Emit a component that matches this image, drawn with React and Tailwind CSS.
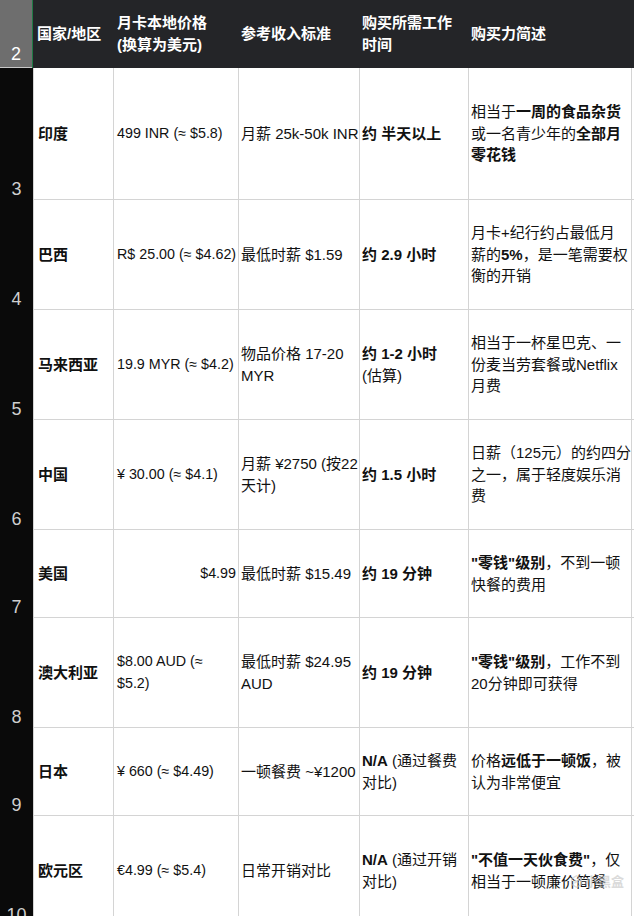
import React from "react";

const FONT = { fontFamily: "'Liberation Sans', 'Noto Sans CJK SC', sans-serif" };

const rows = [
  {
    n: 3, h: "h-[132px]",
    a: "印度",
    b: ["499 INR (≈ $5.8)"],
    c: ["月薪 25k-50k INR"],
    d: [<b key="1">约 半天以上</b>],
    e: [
      <>相当于<b>一周的食品杂货</b></>,
      <>或一名青少年的<b>全部月</b></>,
      <b>零花钱</b>,
    ],
  },
  {
    n: 4, h: "h-[110px]",
    a: "巴西",
    b: ["R$ 25.00 (≈ $4.62)"],
    c: ["最低时薪 $1.59"],
    d: [<b key="1">约 2.9 小时</b>],
    e: [
      "月卡+纪行约占最低月",
      <>薪的<b>5%</b>，是一笔需要权</>,
      "衡的开销",
    ],
  },
  {
    n: 5, h: "h-[110px]",
    a: "马来西亚",
    b: ["19.9 MYR (≈ $4.2)"],
    c: ["物品价格 17-20", "MYR"],
    d: [<b key="1">约 1-2 小时</b>, "(估算)"],
    e: ["相当于一杯星巴克、一", "份麦当劳套餐或Netflix", "月费"],
  },
  {
    n: 6, h: "h-[110px]",
    a: "中国",
    b: ["¥ 30.00 (≈ $4.1)"],
    c: ["月薪 ¥2750 (按22", "天计)"],
    d: [<b key="1">约 1.5 小时</b>],
    e: ["日薪（125元）的约四分", "之一，属于轻度娱乐消", "费"],
  },
  {
    n: 7, h: "h-[88px]",
    a: "美国",
    b: ["$4.99"],
    bRight: true,
    c: ["最低时薪 $15.49"],
    d: [<b key="1">约 19 分钟</b>],
    e: [<><b>"零钱"级别</b>，不到一顿</>, "快餐的费用"],
  },
  {
    n: 8, h: "h-[110px]",
    a: "澳大利亚",
    b: ["$8.00 AUD (≈", "$5.2)"],
    c: ["最低时薪 $24.95", "AUD"],
    d: [<b key="1">约 19 分钟</b>],
    e: [<><b>"零钱"级别</b>，工作不到</>, "20分钟即可获得"],
  },
  {
    n: 9, h: "h-[88px]",
    a: "日本",
    b: ["¥ 660 (≈ $4.49)"],
    c: ["一顿餐费 ~¥1200"],
    d: [<><b>N/A</b> (通过餐费</>, "对比)"],
    e: [<>价格<b>远低于一顿饭</b>，被</>, "认为非常便宜"],
  },
  {
    n: 10, h: "h-[110px]",
    a: "欧元区",
    b: ["€4.99 (≈ $5.4)"],
    c: ["日常开销对比"],
    d: [<><b>N/A</b> (通过开销</>, "对比)"],
    e: [<><b>"不值一天伙食费"</b>，仅</>, "相当于一顿廉价简餐"],
  },
];

function Lines({ lines }) {
  return (
    <div className="flex flex-col">
      {lines.map((l, i) => (
        <div key={i} className="whitespace-nowrap">
          {l}
        </div>
      ))}
    </div>
  );
}

function Row({ r }) {
  return (
    <div className={`flex ${r.h} shrink-0`}>
      <div className="w-[33px] shrink-0 bg-[#0a0a0a] flex items-end justify-center pb-[1px] text-[18px] leading-[20px] text-[#cfcfcf] font-light">
        {r.n}
      </div>
      <div className="flex flex-1 border-b border-[#d4d4d4] bg-white text-[15px] leading-[21.5px] text-[#111]">
        <div className="w-[81px] shrink-0 border-x border-[#d4d4d4] flex items-center pl-[4px] font-bold">
          {r.a}
        </div>
        <div
          className={`w-[125px] shrink-0 border-r border-[#d4d4d4] flex items-center px-[3px] text-[14.3px] ${
            r.bRight ? "justify-end pr-[2px]" : ""
          }`}
        >
          <Lines lines={r.b} />
        </div>
        <div className="w-[121px] shrink-0 border-r border-[#d4d4d4] flex items-center px-[2px]">
          <Lines lines={r.c} />
        </div>
        <div className="w-[109px] shrink-0 border-r border-[#d4d4d4] flex items-center px-[2px]">
          <Lines lines={r.d} />
        </div>
        <div className="w-[163px] shrink-0 border-r border-[#d4d4d4] flex items-center px-[2px]">
          <Lines lines={r.e} />
        </div>
        <div className="flex-1" />
      </div>
    </div>
  );
}

export default function App() {
  return (
    <div
      className="relative w-[634px] h-[916px] overflow-hidden bg-white flex flex-col"
      style={FONT}
    >
      <div className="flex h-[68px] shrink-0">
        <div className="w-[32px] shrink-0 bg-[#6e6e6e] border-b border-[#c8c8c8] flex items-end justify-center pb-[3px] text-[18px] leading-[20px] text-white font-light">
          2
        </div>
        <div className="w-[1px] shrink-0 bg-[#1f7a45]" />
        <div className="flex flex-1 bg-[#242528] text-white font-bold text-[15px] leading-[22px]">
          <div className="w-[81px] shrink-0 flex items-center pl-[4px]">国家/地区</div>
          <div className="w-[125px] shrink-0 flex items-center px-[3px]">
            <Lines lines={["月卡本地价格", "(换算为美元)"]} />
          </div>
          <div className="w-[121px] shrink-0 flex items-center px-[2px]">参考收入标准</div>
          <div className="w-[109px] shrink-0 flex items-center px-[2px]">
            <Lines lines={["购买所需工作", "时间"]} />
          </div>
          <div className="w-[163px] shrink-0 flex items-center px-[2px]">购买力简述</div>
          <div className="flex-1" />
        </div>
      </div>
      {rows.map((r) => (
        <Row key={r.n} r={r} />
      ))}
      <div className="absolute left-[570px] top-[874px] flex items-center gap-[2px] whitespace-nowrap text-[#c4c4c4] opacity-60 text-[13px] leading-[15px] font-bold">
        <svg width="13" height="13" viewBox="0 0 16 16">
          <path d="M8 1 L14 4.5 L14 11.5 L8 15 L2 11.5 L2 4.5 Z" fill="none" stroke="#c4c4c4" strokeWidth="1.6" />
          <path d="M5.5 6 L10.5 10 M10.5 6 L5.5 10" stroke="#c4c4c4" strokeWidth="1.6" />
        </svg>
        <span>小黑盒</span>
      </div>
    </div>
  );
}
